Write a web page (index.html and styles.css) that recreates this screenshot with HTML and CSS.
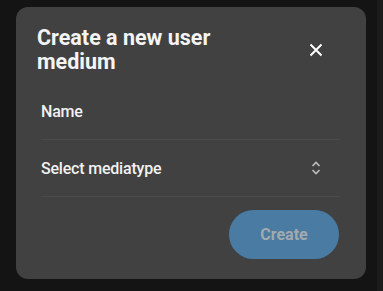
FILE: index.html
```html
<!DOCTYPE html>
<html lang="en">
<head>
  <meta charset="UTF-8" />
  <title>Create a new user medium</title>
  <link rel="stylesheet" href="styles.css">
</head>
<body>
  <div class="backdrop">
    <div class="dialog" role="dialog" aria-label="Create a new user medium">
      <div class="dialog-header">
        <h2>Create a new user medium</h2>
        <button class="close-btn" type="button" aria-label="Close">
          <svg width="14" height="14" viewBox="0 0 14 14">
            <path d="M1.5 1.5 L12.5 12.5 M12.5 1.5 L1.5 12.5" stroke="#fff" stroke-width="2" fill="none"/>
          </svg>
        </button>
      </div>

      <div class="dialog-body">
        <div class="field">
          <span class="field-label">Name</span>
        </div>
        <div class="field">
          <span class="field-label">Select mediatype</span>
          <svg class="chevrons" width="12" height="14" viewBox="0 0 12 14">
            <path d="M2.5 5 L6 1.5 L9.5 5 M2.5 9 L6 12.5 L9.5 9" stroke="#bdbdbd" stroke-width="1.6" fill="none"/>
          </svg>
        </div>
      </div>

      <div class="dialog-footer">
        <button class="create-btn" type="button" disabled>Create</button>
      </div>
    </div>
  </div>
  <div class="scrollbar"></div>
</body>
</html>
```

FILE: styles.css
```css
/* Base */
html, body {
  height: 100%;
}

body {
  margin: 0;
  display: flex;
  background: #141414;
  font-family: Roboto, 'Liberation Sans', Arial, sans-serif;
  color: #f0f0f0;
  overflow: hidden;
}

.backdrop {
  flex: 1;
  padding: 7px 0 0 16px;
}

.scrollbar {
  width: 6px;
  background: #1c1c1c;
}

/* Dialog */
.dialog {
  width: 350px;
  height: 272px;
  background: #414141;
  border-radius: 12px;
  box-sizing: border-box;
  padding: 19px 26px 0 21px;
  display: flex;
  flex-direction: column;
}

.dialog-header {
  display: flex;
  align-items: center;
  justify-content: space-between;
}

.dialog-header h2 {
  margin: 0;
  width: 220px;
  font-size: 21.5px;
  line-height: 24px;
  font-weight: 700;
  color: #f4f4f4;
}

.close-btn {
  background: transparent;
  border: none;
  padding: 0;
  margin-right: 17px;
  margin-top: -1px;
  width: 14px;
  height: 14px;
  cursor: pointer;
  display: flex;
}

.dialog-body {
  margin: 9px 0 0 4px;
}

.field {
  height: 56px;
  border-bottom: 1px solid #4b4b4b;
  display: flex;
  align-items: center;
  justify-content: space-between;
  padding-right: 18px;
}

.field-label {
  font-size: 16px;
  font-weight: 500;
  color: #f2f2f2;
  letter-spacing: -0.2px;
}

.dialog-footer {
  display: flex;
  justify-content: flex-end;
  margin-top: 13px;
}

.create-btn {
  width: 110px;
  height: 49px;
  border: none;
  border-radius: 25px;
  background: #497ba3;
  color: #a3aaae;
  font-family: inherit;
  font-size: 16px;
  font-weight: 700;
  margin-right: 1px;
}
```
